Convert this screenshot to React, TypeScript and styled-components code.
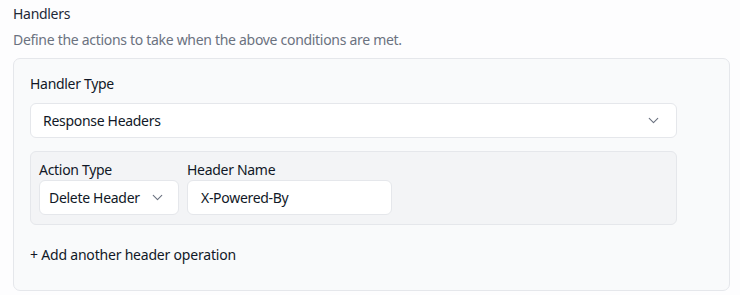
import styled, { createGlobalStyle } from 'styled-components'

const GlobalStyle = createGlobalStyle`
  html, body {
    margin: 0;
    padding: 0;
    background: #fdfdfe;
  }
  body {
    font-family: 'Noto Sans', 'Open Sans', sans-serif;
    letter-spacing: -0.3px;
    color: #1f2937;
  }
`

const Page = styled.div`
  padding: 4px 10px 0 13px;
`

const Title = styled.div`
  font-size: 14px;
  line-height: 20px;
  color: #1f2937;
`

const Description = styled.div`
  margin-top: 6px;
  font-size: 14px;
  line-height: 20px;
  color: #6b7280;
`

const Card = styled.div`
  margin-top: 8px;
  box-sizing: border-box;
  background: #f9fafb;
  border: 1px solid #e5e7eb;
  border-radius: 7px;
  padding: 15px 52px 25px 16px;
`

const Label = styled.div<{ $gap?: number }>`
  font-size: 14px;
  line-height: 20px;
  color: #111827;
  margin-bottom: ${({ $gap }) => $gap ?? 0}px;
`

const Select = styled.div<{ $width?: string; $compact?: boolean }>`
  box-sizing: border-box;
  display: flex;
  align-items: center;
  justify-content: space-between;
  width: ${({ $width }) => $width ?? '100%'};
  height: 35px;
  padding: ${({ $compact }) => ($compact ? '0 12px 0 9px' : '0 14px 0 12px')};
  background: #ffffff;
  border: 1px solid #e5e7eb;
  border-radius: 6px;
  font-size: 14px;
  color: #111827;
  svg {
    flex: none;
    color: #6b7280;
  }
`

const Input = styled.div`
  box-sizing: border-box;
  display: flex;
  align-items: center;
  width: 205px;
  height: 35px;
  padding: 0 13px;
  background: #ffffff;
  border: 1px solid #e5e7eb;
  border-radius: 6px;
  font-size: 14px;
  color: #111827;
`

const Group = styled.div`
  margin-top: 13px;
  box-sizing: border-box;
  display: flex;
  gap: 8px;
  background: #f3f4f6;
  border: 1px solid #e5e7eb;
  border-radius: 6px;
  padding: 8px 8px 9px;
`

const Field = styled.div`
  display: flex;
  flex-direction: column;
`

const AddLink = styled.div`
  margin-top: 20px;
  font-size: 14px;
  line-height: 20px;
  color: #111827;
  letter-spacing: -0.2px;
  cursor: pointer;
`

const Chevron = () => (
  <svg width="17" height="17" viewBox="0 0 24 24" fill="none" stroke="currentColor" strokeWidth="1.6" strokeLinecap="round" strokeLinejoin="round">
    <path d="m6 9 6 6 6-6" />
  </svg>
)

export default function App() {
  return (
    <>
      <GlobalStyle />
      <Page>
        <Title>Handlers</Title>
        <Description>Define the actions to take when the above conditions are met.</Description>
        <Card>
          <Label $gap={9}>Handler Type</Label>
          <Select>
            <span>Response Headers</span>
            <Chevron />
          </Select>
          <Group>
            <Field>
              <Label>Action Type</Label>
              <Select $width="140px" $compact>
                <span>Delete Header</span>
                <Chevron />
              </Select>
            </Field>
            <Field>
              <Label>Header Name</Label>
              <Input>X-Powered-By</Input>
            </Field>
          </Group>
          <AddLink>+ Add another header operation</AddLink>
        </Card>
      </Page>
    </>
  )
}
